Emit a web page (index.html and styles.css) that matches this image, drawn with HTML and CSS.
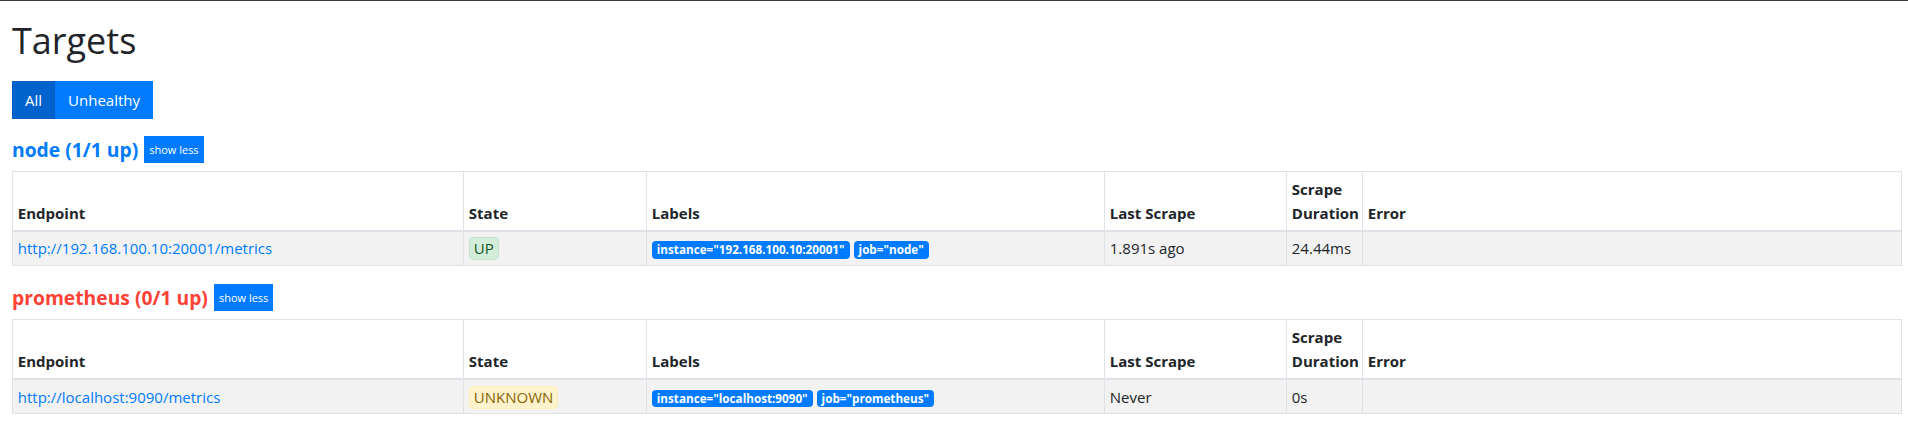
FILE: index.html
```html
<!DOCTYPE html>
<html lang="en">
<head>
<meta charset="utf-8">
<title>Targets</title>
<link rel="stylesheet" href="styles.css">
</head>
<body>
<div class="topbar"></div>
<main class="page">
  <h1 class="title">Targets</h1>
  <div class="btn-group">
    <button class="btn btn-active">All</button>
    <button class="btn">Unhealthy</button>
  </div>

  <section class="pool">
    <div class="pool-head">
      <a class="pool-title healthy" href="#node">node (1/1 up)</a>
      <button class="btn-xs">show less</button>
    </div>
    <table class="targets">
      <colgroup>
        <col class="c-endpoint"><col class="c-state"><col class="c-labels"><col class="c-last"><col class="c-dur"><col class="c-error">
      </colgroup>
      <thead>
        <tr><th>Endpoint</th><th>State</th><th>Labels</th><th>Last Scrape</th><th>Scrape Duration</th><th>Error</th></tr>
      </thead>
      <tbody>
        <tr>
          <td><a class="endpoint" href="#">http://192.168.100.10:20001/metrics</a></td>
          <td><span class="state state-up">UP</span></td>
          <td><span class="label">instance="192.168.100.10:20001"</span><span class="label">job="node"</span></td>
          <td>1.891s ago</td>
          <td>24.44ms</td>
          <td></td>
        </tr>
      </tbody>
    </table>
  </section>

  <section class="pool">
    <div class="pool-head">
      <a class="pool-title unhealthy" href="#prometheus">prometheus (0/1 up)</a>
      <button class="btn-xs">show less</button>
    </div>
    <table class="targets">
      <colgroup>
        <col class="c-endpoint"><col class="c-state"><col class="c-labels"><col class="c-last"><col class="c-dur"><col class="c-error">
      </colgroup>
      <thead>
        <tr><th>Endpoint</th><th>State</th><th>Labels</th><th>Last Scrape</th><th>Scrape Duration</th><th>Error</th></tr>
      </thead>
      <tbody>
        <tr>
          <td><a class="endpoint" href="#">http://localhost:9090/metrics</a></td>
          <td><span class="state state-unknown">UNKNOWN</span></td>
          <td><span class="label">instance="localhost:9090"</span><span class="label">job="prometheus"</span></td>
          <td>Never</td>
          <td>0s</td>
          <td></td>
        </tr>
      </tbody>
    </table>
  </section>
</main>
</body>
</html>
```

FILE: styles.css
```css
* { box-sizing: border-box; }

html, body {
  margin: 0;
  padding: 0;
  background: #fff;
}

body {
  font-family: "Open Sans", "Noto Sans", "DejaVu Sans", sans-serif;
  font-size: 15px;
  line-height: 24px;
  color: #212529;
}

.topbar {
  height: 1px;
  background: #343a40;
}

.page {
  padding: 0 6px 0 12px;
}

.title {
  margin: 16px 0 16px;
  font-size: 36px;
  font-weight: 400;
  line-height: 48px;
  color: #212529;
}

.btn-group {
  display: flex;
}

.btn {
  font-family: inherit;
  font-size: 15px;
  line-height: 24px;
  padding: 6px 12px;
  border: 1px solid #007bff;
  border-radius: 0;
  background: #007bff;
  color: #fff;
  cursor: pointer;
}

.btn-active {
  background: #0062cc;
  border-color: #005cbf;
}

.pool-head {
  display: flex;
  align-items: center;
  gap: 6px;
  height: 27px;
  margin: 17px 0 8px;
}

.pool + .pool .pool-head {
  margin-top: 0;
}

.pool-title {
  font-size: 19.3px;
  font-weight: 700;
  text-decoration: none;
  line-height: 27px;
}

.healthy { color: #007bff; }
.unhealthy { color: #ff4136; }

.btn-xs {
  font-family: inherit;
  font-size: 11px;
  line-height: 25px;
  height: 27px;
  padding: 0 4px;
  border: 1px solid #007bff;
  border-radius: 0;
  background: #007bff;
  color: #fff;
  cursor: pointer;
}

.targets {
  width: 100%;
  table-layout: fixed;
  border-collapse: collapse;
  margin-bottom: 18px;
}

.c-endpoint { width: 451px; }
.c-state { width: 183px; }
.c-labels { width: 458px; }
.c-last { width: 182px; }
.c-dur { width: 76px; }

.targets th,
.targets td {
  border: 1px solid #dee2e6;
  padding: 4.8px;
  text-align: left;
}

.targets th {
  vertical-align: bottom;
  font-weight: 700;
  border-bottom-width: 2px;
}

.targets td {
  vertical-align: top;
  background: #f2f2f2;
}

.endpoint {
  color: #007bff;
  text-decoration: none;
}

.state {
  display: inline-block;
  padding: 0 4px;
  border: 1px solid;
  border-radius: 4px;
  line-height: 21px;
}

.state-up {
  background: #d4edda;
  border-color: #c3e6cb;
  color: #155724;
}

.state-unknown {
  background: #fff3cd;
  border-color: #ffeeba;
  color: #856404;
}

.label {
  display: inline-block;
  margin-right: 4px;
  padding: 3px 5px;
  border-radius: 4px;
  background: #007bff;
  color: #fff;
  font-size: 11.7px;
  font-weight: 700;
  line-height: 1;
  white-space: nowrap;
}
```
